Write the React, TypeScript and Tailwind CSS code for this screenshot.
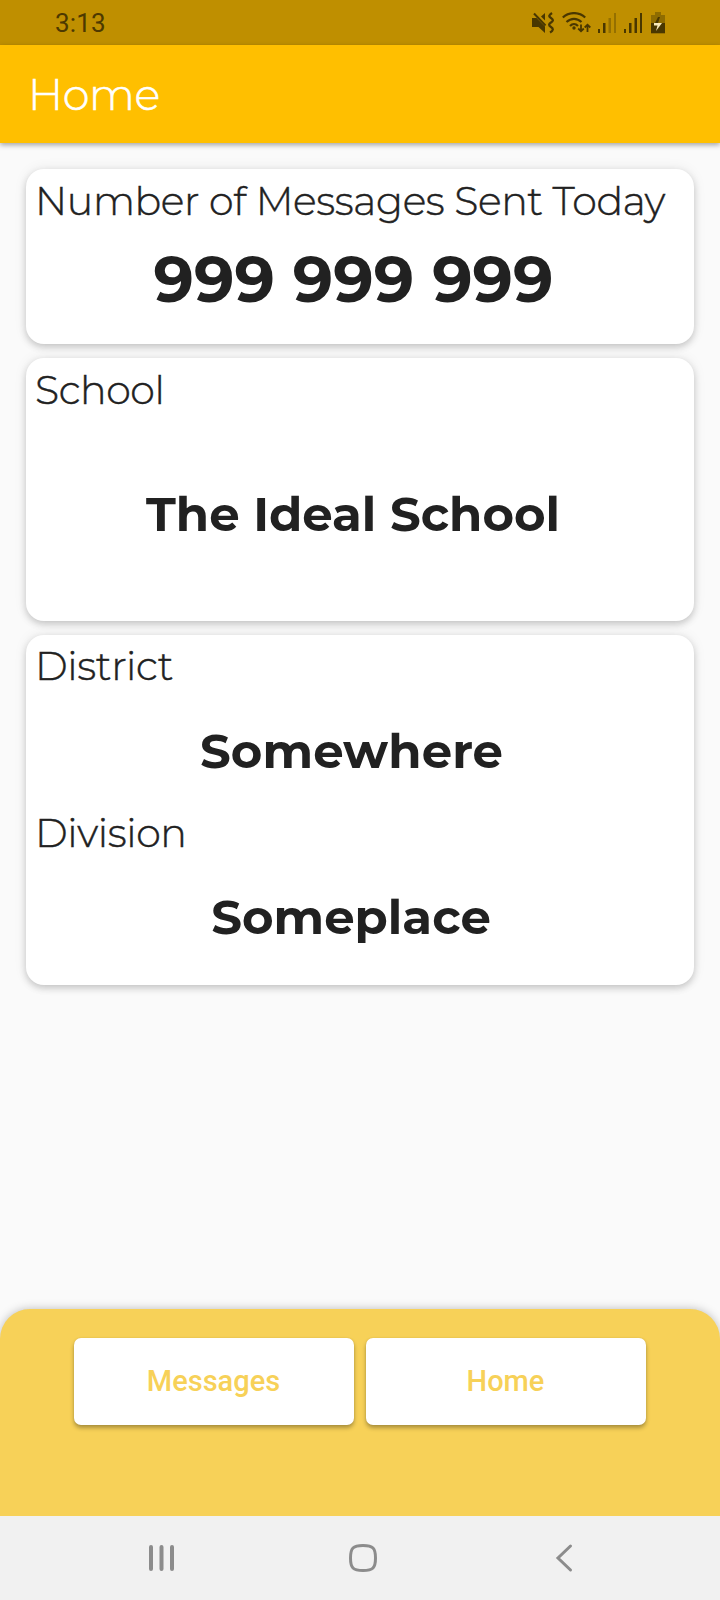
import type { ReactNode } from "react";

const cardBase =
  "rounded-[18px] bg-white shadow-[0_3px_7px_rgba(0,0,0,0.19),0_0_14px_rgba(0,0,0,0.07)]";

function Label({ children, className = "" }: { children: ReactNode; className?: string }) {
  return (
    <h2 className={`pl-[9px] text-[39.5px] font-light tracking-[-0.35px] whitespace-nowrap [-webkit-text-stroke:0.45px_#212121] ${className}`}>{children}</h2>
  );
}

function Value({ children, className = "" }: { children: ReactNode; className?: string }) {
  return <p className={`text-center font-bold whitespace-nowrap ${className}`}>{children}</p>;
}

function StatusIcons() {
  return (
    <div className="flex h-[22px] items-center text-[#493700]">
      <svg className="mr-[8px]" width="22" height="22" viewBox="0 0 22 22" fill="currentColor">
        <path d="M0 6h4.500L13 14.500V21L6.500 15H0Z" />
        <path d="M9 4.500 13 1v7.500Z" />
        <path d="M2 1.500 13.500 13.500" stroke="currentColor" strokeWidth="2" />
        <path d="M20 1c-3.500 2.500-3.500 3.500-1 5s2.500 3 0 4.500-2.500 3 0 4.500 2.500 3.500-1 5.500" fill="none" stroke="currentColor" strokeWidth="2.300" />
      </svg>
      <svg className="mr-[7px]" width="29" height="22" viewBox="0 0 29 22" fill="none" stroke="currentColor" strokeWidth="2.200">
        <path d="M.8 5.500C7-.4 17-.4 23.200 5.500" />
        <path d="M4.500 10C9 5.700 15 5.700 19.500 10" />
        <path d="M8 14C10.500 11.300 13.500 11.300 16 14" />
        <circle cx="12" cy="16" r="1.700" fill="currentColor" stroke="none" />
        <path d="M19 12.500v6.500M16.200 16.500 19 19.300l2.800-2.800M25.500 20v-6.500M22.700 15.500l2.800-2.800 2.800 2.800" strokeWidth="1.800" />
      </svg>
      <svg className="mr-[8px]" width="18" height="22" viewBox="0 0 18 22" fill="currentColor">
        <path d="M0 17h2v4H0ZM5 11h2.500v10H5Z" />
        <path d="M10.500 6H13v15h-2.500ZM16 1h2v20h-2Z" opacity=".35" />
      </svg>
      <svg className="mr-[9px]" width="18" height="22" viewBox="0 0 18 22" fill="currentColor">
        <path d="M0 17h2v4H0ZM5 11h2.500v10H5ZM10.500 6H13v15h-2.500ZM16 1h2v20h-2Z" />
      </svg>
      <svg width="14" height="22" viewBox="0 0 14 22" fill="currentColor">
        <path d="M4 0h6v3h4v8H0V3h4Z" opacity=".4" />
        <path d="M0 11h14v10.300H0Z" />
        <path d="M7 5 4 11h3l2-6Z" />
        <path d="M3 11h8l-6 8 1.500-5.500H3Z" fill="#f8e9b8" />
      </svg>
    </div>
  );
}

function NavButton({ children }: { children: ReactNode }) {
  return (
    <button className="h-[87px] w-[280px] rounded-[7px] bg-white pr-[1px] font-[Roboto,sans-serif] text-[29px] font-medium text-[#f7d158] shadow-[0_3px_4px_rgba(0,0,0,0.3),0_0_2px_rgba(0,0,0,0.1)]">
      {children}
    </button>
  );
}

export default function App() {
  return (
    <div className="flex h-[1600px] w-[720px] flex-col overflow-hidden bg-[#fafafa] font-[Montserrat,Inter,sans-serif] text-[#212121]">
      <div className="flex h-[45px] shrink-0 items-center justify-between bg-[#bf8f00] pr-[55px] pl-[55px]">
        <span className="pt-px font-[Roboto,sans-serif] text-[26px] tracking-[0.2px] text-[#4d3900]">3:13</span>
        <StatusIcons />
      </div>
      <header className="flex h-[98px] shrink-0 items-center bg-[#ffbf00] pl-[28px] shadow-[0_2px_5px_rgba(0,0,0,0.35)]">
        <h1 className="text-[43px] leading-[95px] font-light tracking-[-0.3px] text-white [-webkit-text-stroke:0.6px_#ffffff]">Home</h1>
      </header>

      <main className="flex flex-1 flex-col gap-[14px] px-[26px] pt-[26px]">
        <section className={`h-[175px] ${cardBase}`}>
          <Label className="leading-[64px]">Number of Messages Sent Today</Label>
          <Value className="pr-[13px] text-[63.5px] leading-[93px]">999 999 999</Value>
        </section>
        <section className={`h-[263px] ${cardBase}`}>
          <Label className="leading-[64px]">School</Label>
          <Value className="pr-[14px] text-[48.2px] leading-[183px]">The Ideal School</Value>
        </section>
        <section className={`h-[350px] ${cardBase}`}>
          <Label className="leading-[62px]">District</Label>
          <Value className="pr-[17px] text-[48.2px] leading-[108px]">Somewhere</Value>
          <Label className="leading-[56px]">Division</Label>
          <Value className="pr-[18px] text-[48.2px] leading-[112px]">Someplace</Value>
        </section>
      </main>

      <div className="flex h-[207px] shrink-0 justify-center gap-[12px] rounded-t-[30px] bg-[#f7d158] pt-[29px] shadow-[0_0_10px_rgba(0,0,0,0.25)]">
        <NavButton>Messages</NavButton>
        <NavButton>Home</NavButton>
      </div>
      <nav className="z-10 flex h-[84px] shrink-0 items-center bg-[#f1f1f1] pl-[148px] text-[#8c8c8c]">
        <svg width="28" height="30" viewBox="0 0 28 30" fill="none" stroke="currentColor" strokeWidth="4" strokeLinecap="round">
          <path d="M3 4v22M13.500 4v22M24 4v22" />
        </svg>
        <svg className="ml-[171.5px]" width="30" height="30" viewBox="0 0 30 30" fill="none" stroke="currentColor" strokeWidth="3">
          <path d="M15 2.500c10 0 12.500 2.500 12.500 12.500S25 27.500 15 27.500 2.500 25 2.500 15 5 2.500 15 2.500Z" />
        </svg>
        <svg className="ml-[177.5px]" width="18" height="30" viewBox="0 0 18 30" fill="none" stroke="currentColor" strokeWidth="3" strokeLinecap="round">
          <path d="M15.500 3 3 15l12.500 12" />
        </svg>
      </nav>
    </div>
  );
}
